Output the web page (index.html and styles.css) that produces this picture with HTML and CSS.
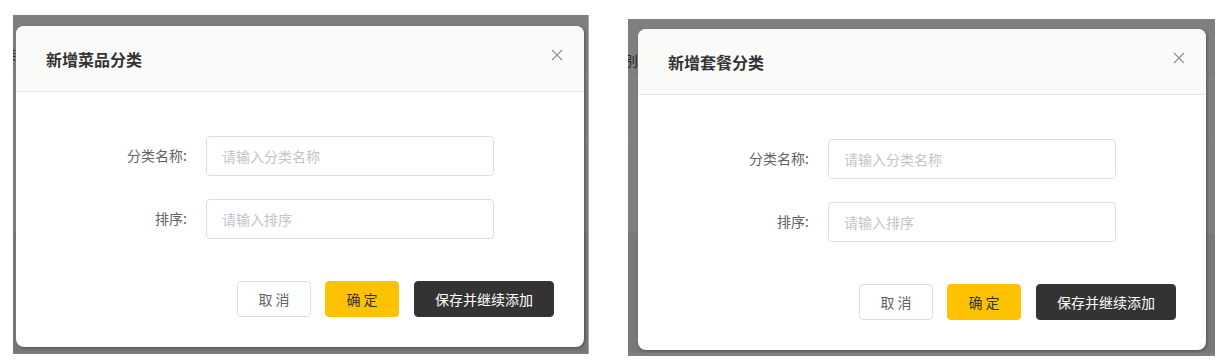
FILE: index.html
```html
<!DOCTYPE html>
<html lang="zh-CN">
<head>
    <meta charset="UTF-8">
    <meta name="viewport" content="width=device-width, initial-scale=1.0">
    <title>新增分类</title>
    <link rel="stylesheet" href="styles.css">
</head>
<body>
    <div class="stage">
        <!-- 菜品分类弹窗 -->
        <div class="shot shot-left">
            <span class="behind">分类</span>
            <div class="dialog">
                <div class="dialog-header">
                    <span class="dialog-title">新增菜品分类</span>
                    <svg class="dialog-close" width="12" height="12" viewBox="0 0 12 12">
                        <path d="M1 1 L11 11 M11 1 L1 11" stroke="#909399" stroke-width="1.2" fill="none"/>
                    </svg>
                </div>
                <div class="dialog-body">
                    <div class="form-item">
                        <label class="form-label">分类名称:</label>
                        <input class="form-input" type="text" placeholder="请输入分类名称">
                    </div>
                    <div class="form-item">
                        <label class="form-label">排序:</label>
                        <input class="form-input" type="text" placeholder="请输入排序">
                    </div>
                </div>
                <div class="dialog-footer">
                    <button class="btn btn-cancel">取 消</button>
                    <button class="btn btn-primary">确 定</button>
                    <button class="btn btn-dark">保存并继续添加</button>
                </div>
            </div>
        </div>

        <!-- 套餐分类弹窗 -->
        <div class="shot shot-right">
            <span class="behind">类别</span>
            <div class="dialog">
                <div class="dialog-header">
                    <span class="dialog-title">新增套餐分类</span>
                    <svg class="dialog-close" width="12" height="12" viewBox="0 0 12 12">
                        <path d="M1 1 L11 11 M11 1 L1 11" stroke="#909399" stroke-width="1.2" fill="none"/>
                    </svg>
                </div>
                <div class="dialog-body">
                    <div class="form-item">
                        <label class="form-label">分类名称:</label>
                        <input class="form-input" type="text" placeholder="请输入分类名称">
                    </div>
                    <div class="form-item">
                        <label class="form-label">排序:</label>
                        <input class="form-input" type="text" placeholder="请输入排序">
                    </div>
                </div>
                <div class="dialog-footer">
                    <button class="btn btn-cancel">取 消</button>
                    <button class="btn btn-primary">确 定</button>
                    <button class="btn btn-dark">保存并继续添加</button>
                </div>
            </div>
        </div>
    </div>
</body>
</html>
```

FILE: styles.css
```css
* {
    box-sizing: border-box;
}
body {
    margin: 0;
    background: #fff;
    font-family: "Noto Sans CJK SC", "Noto Sans", sans-serif;
}
.stage {
    display: flex;
    align-items: flex-start;
    width: 1230px;
    height: 362px;
}
.shot {
    position: relative;
    overflow: hidden;
    background-color: #7f7f7f;
}
.shot-left {
    margin: 15px 0 0 13px;
    padding: 11px 4px 7px 3px;
    border-right: 1px solid #a9a9a9;
    background-image:
        linear-gradient(#888, #888),
        linear-gradient(#868686, #868686),
        linear-gradient(#787878, #787878);
    background-size: 100% 1px, 100% 1px, 100% 120px;
    background-position: 0 63px, 0 122px, 0 218px;
    background-repeat: no-repeat;
}
.shot-right {
    margin: 19px 0 0 39px;
    padding: 10px 9px 6px 10px;
    background-image:
        linear-gradient(#888, #888),
        linear-gradient(#868686, #868686),
        linear-gradient(#787878, #787878);
    background-size: 100% 1px, 100% 1px, 100% 120px;
    background-position: 0 59px, 0 118px, 0 214px;
    background-repeat: no-repeat;
}
.behind {
    position: absolute;
    top: 28px;
    font-size: 14px;
    color: #222;
}
.shot-left .behind {
    left: -25px;
}
.shot-right .behind {
    left: -18px;
    top: 31px;
}
.dialog {
    position: relative;
    width: 568px;
    height: 321px;
    background: #fff;
    border-radius: 8px;
    box-shadow: 1px 1px 3px rgba(0, 0, 0, 0.35);
    overflow: hidden;
}
.dialog-header {
    height: 66px;
    display: flex;
    align-items: center;
    justify-content: space-between;
    padding: 2px 21px 0 30px;
    background: #fafaf9;
    border-bottom: 1px solid #e6e6e6;
}
.dialog-title {
    font-size: 16px;
    font-weight: bold;
    color: #333;
    margin-top: -2px;
}
.dialog-close {
    margin-top: -9px;
}
.dialog-body {
    padding-top: 44px;
}
.form-item {
    display: flex;
    align-items: center;
    margin-bottom: 23px;
}
.form-item:last-child {
    margin-bottom: 0;
}
.form-label {
    width: 171px;
    margin-right: 19px;
    margin-top: -2px;
    text-align: right;
    font-size: 14px;
    color: #606266;
}
.form-input {
    width: 288px;
    height: 40px;
    padding: 0 15px;
    border: 1px solid #dcdfe6;
    border-radius: 4px;
    font-family: inherit;
    font-size: 14px;
    color: #606266;
    outline: none;
}
.form-input::placeholder {
    color: #c0c4cc;
}
.dialog-footer {
    display: flex;
    justify-content: flex-end;
    gap: 14px;
    padding: 42px 30px 30px 0;
}
.btn {
    height: 36px;
    border-radius: 4px;
    font-family: inherit;
    font-size: 14px;
    cursor: pointer;
}
.btn-cancel {
    width: 74px;
    background: #fff;
    border: 1px solid #dcdfe6;
    color: #606266;
}
.btn-primary {
    width: 74px;
    background: #ffc200;
    border: 1px solid #ffc200;
    color: #333;
}
.btn-dark {
    width: 140px;
    margin-left: 1px;
    background: #333;
    border: 1px solid #333;
    color: #fff;
}
```
